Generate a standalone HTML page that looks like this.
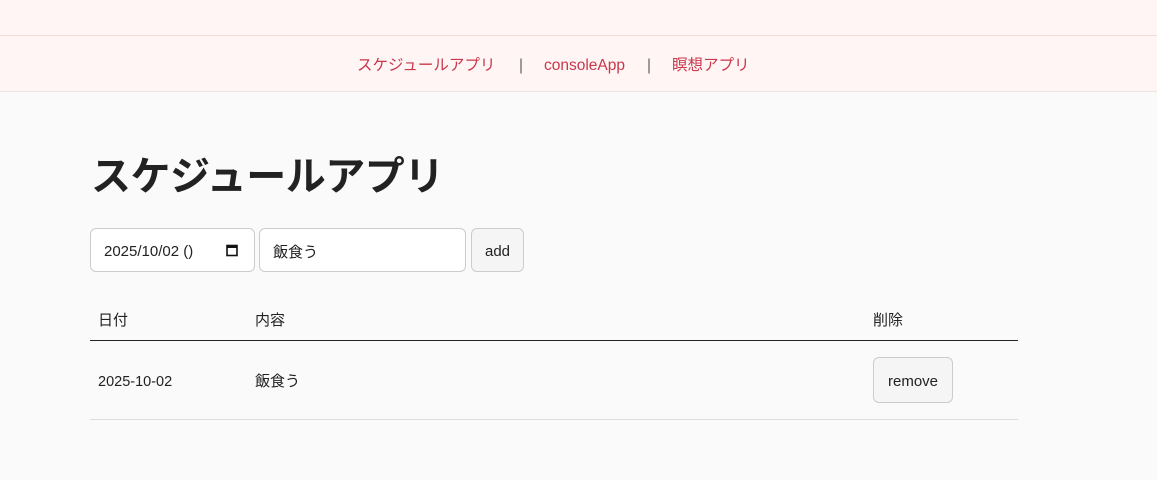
<!DOCTYPE html>
<html><head><meta charset="utf-8"><style>
html,body{margin:0;padding:0;width:1157px;height:480px;overflow:hidden;background:#fafafa;font-family:"Liberation Sans","Noto Sans CJK JP",sans-serif;color:#222;}
.top{height:35px;background:#fff5f5;border-bottom:1px solid #f3dcd6;}
.nav{height:55px;background:#fff5f5;border-bottom:1px solid #f0e4e0;position:relative;font-size:15.5px;color:#c8374a;}
.nav span{position:absolute;line-height:20px;height:20px;top:20px;display:flex;align-items:center;}
.sep{color:#666;}
h1{position:absolute;left:91px;top:152px;margin:0;font-size:40px;line-height:50px;font-weight:bold;color:#222;letter-spacing:-0.5px;}
.box{position:absolute;top:228px;height:44px;border:1px solid #ccc;border-radius:6px;background:#fff;box-sizing:border-box;font-size:15px;display:flex;align-items:center;}
.btn{background:#f5f5f5;justify-content:center;}
.th,.td{position:absolute;font-size:15px;line-height:20px;height:20px;display:flex;align-items:center;}
.th{top:311px;}
.td{top:372px;}
</style></head><body>
<div class="top"></div>
<div class="nav">
<span style="left:357px">スケジュールアプリ</span>
<span class="sep" style="left:519px">|</span>
<span style="left:544px">consoleApp</span>
<span class="sep" style="left:647px">|</span>
<span style="left:672px">瞑想アプリ</span>
</div>
<h1>スケジュールアプリ</h1>
<div class="box" style="left:90px;width:165px;padding-left:13px;padding-top:2px;">2025/10/02 ()
<svg style="position:absolute;left:135px;top:15px" width="12" height="13" viewBox="0 0 12 13"><rect x="1" y="1.5" width="10" height="10" fill="none" stroke="#111" stroke-width="1.6"/><rect x="1" y="1" width="10" height="3" fill="#111"/></svg></div>
<div class="box" style="left:259px;width:207px;padding-left:13px;padding-top:2px;">飯食う</div>
<div class="box btn" style="left:471px;width:53px;padding-top:2px;">add</div>
<div class="th" style="left:98px">日付</div>
<div class="th" style="left:255px">内容</div>
<div class="th" style="left:873px">削除</div>
<div style="position:absolute;left:90px;top:340px;width:928px;height:1px;background:#222"></div>
<div class="td" style="left:98px;font-size:14.5px;">2025-10-02</div>
<div class="td" style="left:255px">飯食う</div>
<div class="box btn" style="left:873px;top:357px;width:80px;height:46px;padding-top:2px;">remove</div>
<div style="position:absolute;left:90px;top:419px;width:928px;height:1px;background:#ddd"></div>
</body></html>
